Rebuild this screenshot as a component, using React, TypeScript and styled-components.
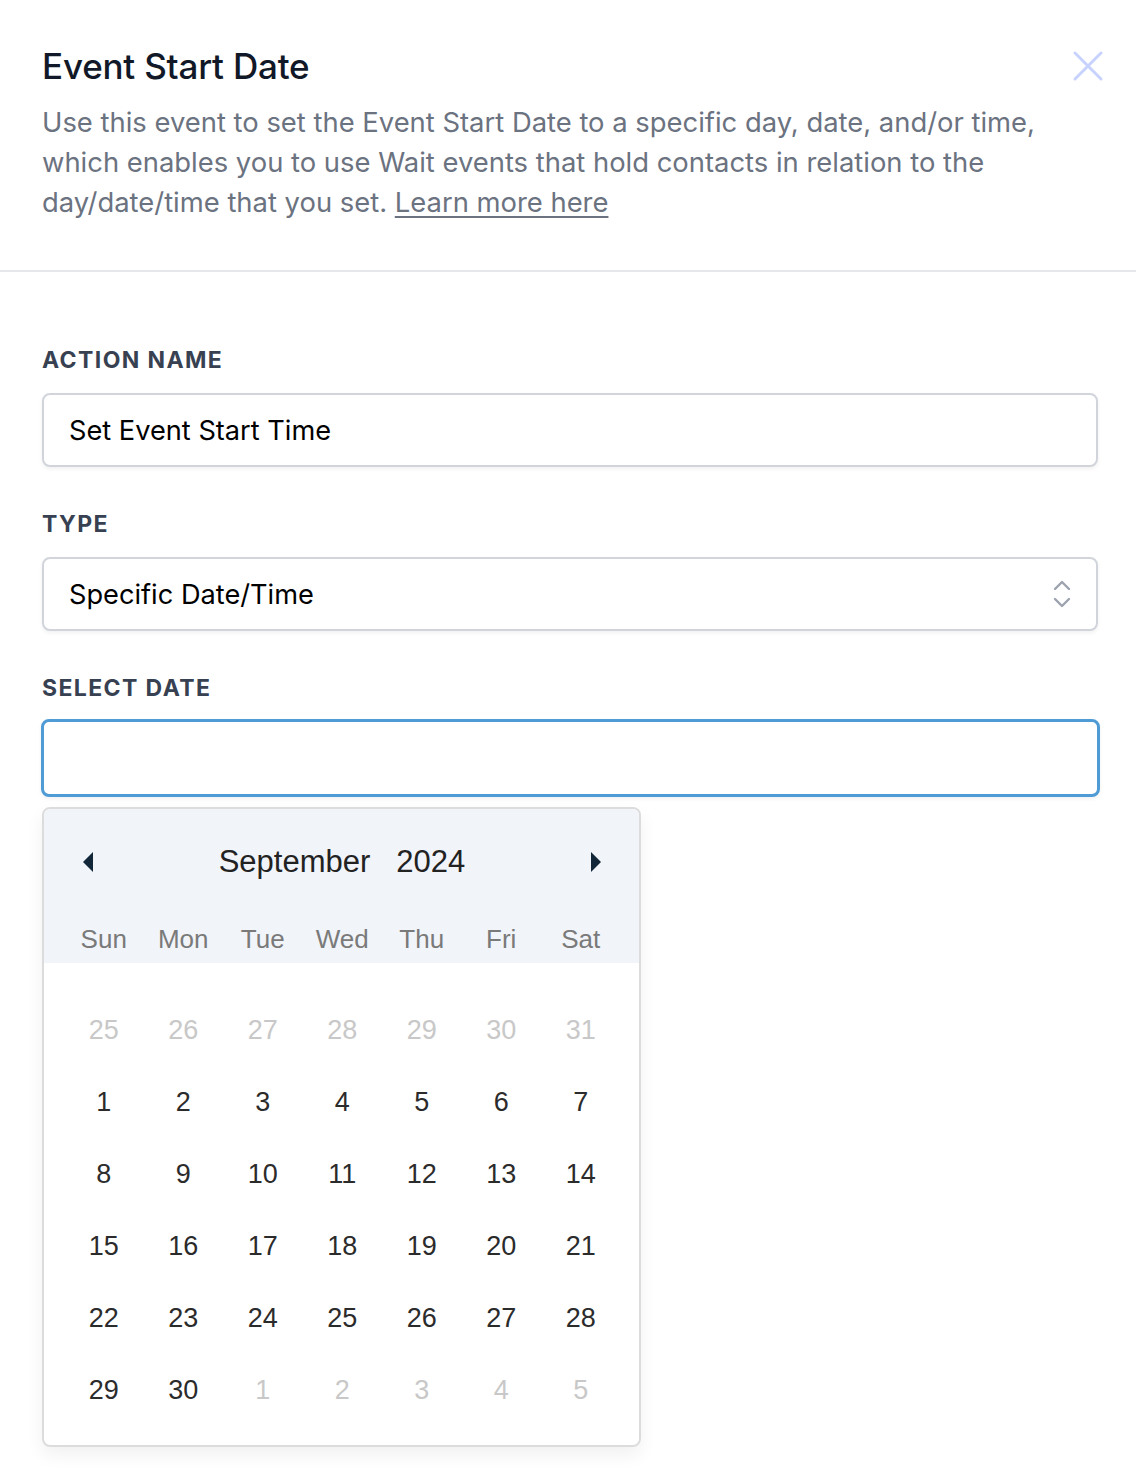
import React from "react";
import styled, { createGlobalStyle } from "styled-components";

const GlobalStyle = createGlobalStyle`
  html, body {
    margin: 0;
    padding: 0;
    background: #ffffff;
    font-family: Inter, "Noto Sans", sans-serif;
  }
`;

const Page = styled.div`
  width: 1136px;
  background: #ffffff;
`;

const Header = styled.header`
  display: flex;
  justify-content: space-between;
  align-items: flex-start;
  gap: 16px;
  padding: 46px 30px 48px 42px;
  border-bottom: 2px solid #e5e7eb;
`;

const HeaderText = styled.div`
  display: flex;
  flex-direction: column;
  gap: 16px;
`;

const Title = styled.h1`
  margin: 0;
  font-size: 35px;
  line-height: 40px;
  font-weight: 500;
  color: #111827;
  letter-spacing: -0.2px;
`;

const Description = styled.p`
  margin: 0;
  font-size: 27.4px;
  line-height: 40px;
  color: #6b7280;
  max-width: 1020px;

  a {
    color: #6b7280;
    text-decoration: underline;
    text-underline-offset: 4px;
  }
`;

const CloseButton = styled.button`
  flex: none;
  width: 36px;
  height: 36px;
  margin-top: 2px;
  padding: 0;
  border: none;
  background: transparent;
  cursor: pointer;
`;

const Body = styled.div`
  display: flex;
  flex-direction: column;
  padding: 73px 38px 40px 42px;
`;

const Field = styled.div<{ gap?: number }>`
  display: flex;
  flex-direction: column;
  gap: 18px;
  margin-bottom: ${({ gap }) => (gap ?? 42)}px;
`;

const Label = styled.label`
  font-size: 23px;
  line-height: 30px;
  font-weight: 700;
  letter-spacing: 1.4px;
  color: #374151;
  text-transform: uppercase;
`;

const Box = styled.div<{ focused?: boolean }>`
  box-sizing: border-box;
  display: flex;
  align-items: center;
  justify-content: space-between;
  height: ${({ focused }) => (focused ? 78 : 74)}px;
  margin: ${({ focused }) => (focused ? "-2px -2px 0 -1px" : "0")};
  padding: 0 24px 0 25px;
  border: ${({ focused }) => (focused ? "3px solid #4f9bd6" : "2px solid #d1d5db")};
  border-radius: 8px;
  background: #ffffff;
  box-shadow: 0 2px 4px rgba(0, 0, 0, 0.06);
  font-size: 27.2px;
  color: #000000;
`;

const Calendar = styled.div`
  box-sizing: border-box;
  width: 599px;
  margin-top: 10px;
  border: 2px solid #dcdcdc;
  border-radius: 8px;
  overflow: hidden;
  box-shadow: 0 8px 18px rgba(0, 0, 0, 0.06);
  font-family: "Liberation Sans", Arial, sans-serif;
`;

const CalHead = styled.div`
  background: #f1f4f9;
  padding: 33px 20px 0;
`;

const MonthRow = styled.div`
  display: flex;
  align-items: center;
  justify-content: space-between;
  height: 40px;
  margin-bottom: 33px;
  padding: 0 17px 0 18px;
`;

const MonthLabel = styled.div`
  display: flex;
  gap: 26px;
  font-size: 31px;
  color: #222222;
`;

const NavArrow = styled.button`
  padding: 0;
  border: none;
  background: transparent;
  width: 12px;
  height: 20px;
  cursor: pointer;
`;

const Grid = styled.div`
  display: grid;
  grid-template-columns: repeat(7, 79.5px);
`;

const DayName = styled.div`
  height: 48px;
  display: flex;
  align-items: center;
  justify-content: center;
  font-size: 26px;
  color: #7a7a7a;
`;

const CalBody = styled.div`
  padding: 31px 20px 19px;
`;

const DayCell = styled.div<{ muted?: boolean }>`
  height: 72px;
  display: flex;
  align-items: center;
  justify-content: center;
  font-size: 27px;
  color: ${({ muted }) => (muted ? "#c8c8c8" : "#2b2b2b")};
  cursor: pointer;
`;

const dayNames = ["Sun", "Mon", "Tue", "Wed", "Thu", "Fri", "Sat"];

const days: { n: number; muted: boolean }[] = [
  ...[25, 26, 27, 28, 29, 30, 31].map((n) => ({ n, muted: true })),
  ...Array.from({ length: 30 }, (_, i) => ({ n: i + 1, muted: false })),
  ...[1, 2, 3, 4, 5].map((n) => ({ n, muted: true })),
];

const CloseIcon = () => (
  <svg width="36" height="36" viewBox="0 0 36 36">
    <path d="M5 5 L31 31 M31 5 L5 31" stroke="#c7d2fe" strokeWidth="3" strokeLinecap="round" />
  </svg>
);

const SortIcon = () => (
  <svg width="20" height="30" viewBox="0 0 20 30">
    <path d="M3 10 L10 3 L17 10 M3 20 L10 27 L17 20" fill="none" stroke="#9ca3af" strokeWidth="2.4" strokeLinecap="round" strokeLinejoin="round" />
  </svg>
);

const TriangleLeft = () => (
  <svg width="12" height="20" viewBox="0 0 12 20">
    <path d="M11 0 L1 10 L11 20 Z" fill="#12263a" />
  </svg>
);

const TriangleRight = () => (
  <svg width="12" height="20" viewBox="0 0 12 20">
    <path d="M1 0 L11 10 L1 20 Z" fill="#12263a" />
  </svg>
);

export default function App() {
  return (
    <Page>
      <GlobalStyle />
      <Header>
        <HeaderText>
          <Title>Event Start Date</Title>
          <Description>
            Use this event to set the Event Start Date to a specific day, date, and/or time,
            which enables you to use Wait events that hold contacts in relation to the
            day/date/time that you set. <a href="#">Learn more here</a>
          </Description>
        </HeaderText>
        <CloseButton aria-label="Close">
          <CloseIcon />
        </CloseButton>
      </Header>
      <Body>
        <Field>
          <Label>Action Name</Label>
          <Box>Set Event Start Time</Box>
        </Field>
        <Field>
          <Label>Type</Label>
          <Box>
            Specific Date/Time
            <SortIcon />
          </Box>
        </Field>
        <Field gap={0}>
          <Label>Select Date</Label>
          <Box focused />
        </Field>
        <Calendar>
          <CalHead>
            <MonthRow>
              <NavArrow aria-label="Previous month">
                <TriangleLeft />
              </NavArrow>
              <MonthLabel>
                <span>September</span>
                <span>2024</span>
              </MonthLabel>
              <NavArrow aria-label="Next month">
                <TriangleRight />
              </NavArrow>
            </MonthRow>
            <Grid>
              {dayNames.map((d) => (
                <DayName key={d}>{d}</DayName>
              ))}
            </Grid>
          </CalHead>
          <CalBody>
            <Grid>
              {days.map((d, i) => (
                <DayCell key={i} muted={d.muted}>
                  {d.n}
                </DayCell>
              ))}
            </Grid>
          </CalBody>
        </Calendar>
      </Body>
    </Page>
  );
}
